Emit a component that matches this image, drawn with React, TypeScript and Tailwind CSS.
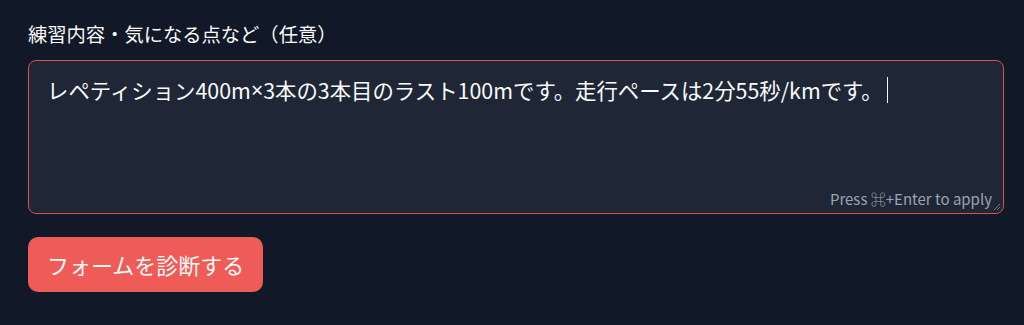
const font = { fontFamily: '"Noto Sans CJK JP", "Noto Sans", sans-serif' };

export default function App() {
  return (
    <div className="h-[325px] w-[1024px] bg-[#111827] pl-7 pt-[20px] text-[#fafafa]" style={font}>
      <label className="block text-[19.3px] leading-7 text-[#fafafa]">練習内容・気になる点など（任意）</label>

      <div className="relative mt-[12px] h-[154px] w-[976px] rounded-[8px] border border-[#dc4f4f] bg-[#1f2737] px-[18px] pt-[13px]">
        <p className="flex items-center text-[21.4px] leading-8 text-[#fafafa]">
          レペティション400m<span style={{ fontFamily: '"Noto Sans", sans-serif' }}>×</span>3本の3本目のラスト100mです。走行ペースは2分55秒/kmです。
          <span className="ml-[4px] inline-block h-[26px] w-px bg-[#fafafa]" />
        </p>
        <span className="absolute bottom-[4px] right-[11px] text-[15px] leading-5 text-[#9ca3af]">
          Press ⌘+Enter to apply
        </span>
        <svg className="absolute bottom-[2px] right-[2px]" width="9" height="9" viewBox="0 0 9 9">
          <path d="M8 2 L2 8 M8 5 L5 8" stroke="#6b7280" strokeWidth="1" />
        </svg>
      </div>

      <button className="mt-[23px] h-[55px] rounded-[10px] bg-[#ef5b56] px-[19px] text-[22px] text-[#fafafa]">
        フォームを診断する
      </button>
    </div>
  );
}
